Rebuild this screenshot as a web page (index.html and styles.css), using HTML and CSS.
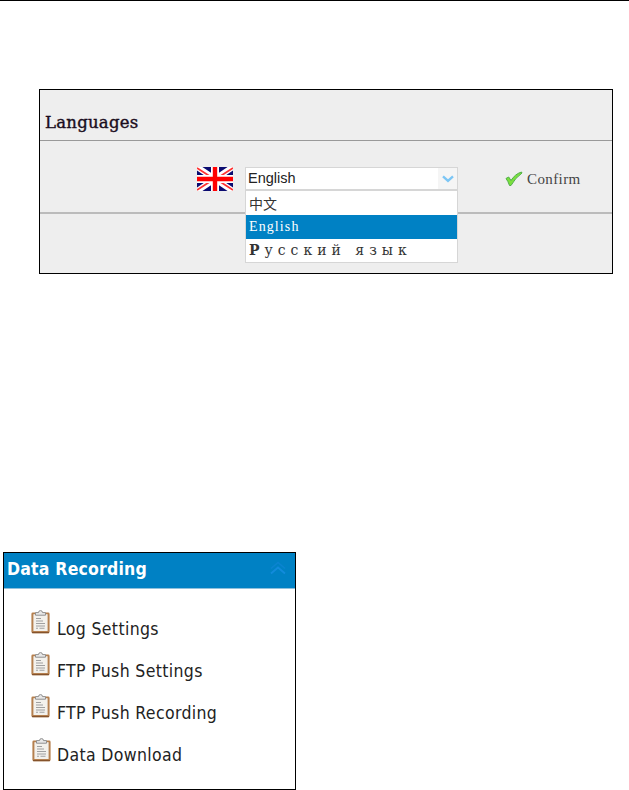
FILE: index.html
```html
<!DOCTYPE html>
<html lang="en">
<head>
  <meta charset="UTF-8">
  <title>Languages</title>
  <link rel="stylesheet" href="styles.css">
</head>
<body>
  <!-- shared icon -->
  <svg class="defs" width="0" height="0">
    <symbol id="clipboard" viewBox="0 0 20 24">
      <rect x=".4" y="2.6" width="18.2" height="20.6" rx="1.4" fill="#b5804f"/>
      <path d="M1 22.6h17" stroke="#85532c" stroke-width="1.2"/>
      <rect x="2.4" y="4.2" width="14.2" height="16.8" fill="#f3f1ec"/>
      <path d="M4.5 5.2V2.6h3q0-2 2-2t2 2h3v2.6z" fill="#e8e8e8" stroke="#909090"/>
      <path d="M5 8.5h5M5 11h7M5 13.5h9M5 16h9M5 18.3h2M8.5 18.3h5" stroke="#a0a0a0" stroke-width="1.1"/>
    </symbol>
  </svg>

  <div class="languages">
    <h2>Languages</h2>
    <div class="lang-row">
      <svg class="flag" width="36" height="24" viewBox="0 0 36 24">
        <rect width="36" height="24" fill="#0b0b70"/>
        <path d="M0 0l36 24M36 0L0 24" stroke="#fff" stroke-width="6"/>
        <path d="M0 1l14 9M36 1L22 10M0 23l14-9M36 23l-14-9" stroke="#f33" stroke-width="1.8"/>
        <path d="M18 0v24M0 12h36" stroke="#fff" stroke-width="8"/>
        <path d="M18 0v24M0 12h36" stroke="#f00" stroke-width="4.4"/>
      </svg>
      <div class="select">
        <div class="select-value">
          <span>English</span>
          <div class="select-arrow">
            <svg width="12" height="8" viewBox="0 0 12 8"><path d="M1 1.3l5 4.5 5-4.5" fill="none" stroke="#7cc6f5" stroke-width="2.4"/></svg>
          </div>
        </div>
        <ul class="select-menu">
          <li class="zh">中文</li>
          <li class="selected">English</li>
          <li class="ru"><b>Р</b>усский язык</li>
        </ul>
      </div>
      <svg class="check" width="18" height="16" viewBox="0 0 18 16">
        <path d="M1 7.5l2.7-1.5 2.3 3.5Q10 3 16.5 1L17 2Q10 7 6 14.5H4.5Q3 10 1 7.5z" fill="#7be03c" stroke="#4fae48"/>
      </svg>
      <span class="confirm">Confirm</span>
    </div>
  </div>

  <div class="recording">
    <div class="recording-title">
      <span>Data Recording</span>
      <svg width="16" height="14" viewBox="0 0 16 14">
        <path d="M1 7.5L8 1.5l7 6" fill="none" stroke="#0b84d0" stroke-width="1.6"/>
        <path d="M1 12.5l7-6 7 6" fill="none" stroke="#128bdc" stroke-width="1.8"/>
      </svg>
    </div>
    <ul class="recording-list">
      <li><svg width="20" height="24"><use href="#clipboard"/></svg><span>Log Settings</span></li>
      <li><svg width="20" height="24"><use href="#clipboard"/></svg><span>FTP Push Settings</span></li>
      <li><svg width="20" height="24"><use href="#clipboard"/></svg><span>FTP Push Recording</span></li>
      <li class="last"><svg width="20" height="24"><use href="#clipboard"/></svg><span>Data Download</span></li>
    </ul>
  </div>
</body>
</html>
```
FILE: styles.css
```css
* {
  box-sizing: border-box;
}

body {
  margin: 0;
  height: 790px;
  overflow: hidden;
  border-top: 1px solid #000;
  background: #fff;
}

ul {
  list-style: none;
  margin: 0;
  padding: 0;
}

.defs {
  position: absolute;
}

/* language panel */
.languages {
  width: 574px;
  height: 185px;
  margin: 88px 0 0 39px;
  border: 1px solid #000;
  background: #eee;
}

.languages h2 {
  height: 51px;
  margin: 0;
  padding: 21px 0 0 5px;
  border-bottom: 1px solid #999;
  font: 16.5px/24px "DejaVu Serif", serif;
  letter-spacing: .25px;
  -webkit-text-stroke: .4px #1a0d1d;
  color: #1a0d1d;
}

.lang-row {
  display: flex;
  align-items: flex-start;
  height: 73px;
  padding-left: 157px;
  border-bottom: 2px solid #bbb;
}

.flag {
  margin-top: 26px;
}

.select {
  width: 213px;
  margin: 26px 0 0 12px;
  position: relative;
}

.select-value {
  display: flex;
  justify-content: space-between;
  height: 24px;
  border: 1px solid #d6d6d6;
  border-bottom-width: 2px;
  background: #fff;
  font: 14.5px/20px "Liberation Sans", Arial, sans-serif;
  color: #222;
  padding-left: 2px;
}

.select-arrow {
  width: 19px;
  background: #f5f5f5;
  display: flex;
  align-items: center;
  justify-content: center;
}

/* opened list hangs over the row border */
.select-menu {
  position: absolute;
  top: 24px;
  left: 0;
  width: 213px;
  border: 1px solid #d6d6d6;
  border-top: none;
  background: #fff;
  color: #333;
}

.select-menu li {
  height: 23px;
  padding-left: 3px;
  font: 14px/23px "Liberation Serif", serif;
  white-space: nowrap;
}

.select-menu .zh {
  height: 24px;
  font: 14px/25px "Noto Sans CJK SC", sans-serif;
}

.select-menu .selected {
  height: 24px;
  background: #0081c4;
  color: #fff;
  line-height: 24px;
  letter-spacing: 1.1px;
}

.select-menu .ru {
  font: 14px/22px "DejaVu Serif", serif;
  letter-spacing: 5px;
}

.check {
  margin: 30px 0 0 47px;
}

.confirm {
  margin: 27px 0 0 4px;
  font: 15px/22px "Liberation Serif", serif;
  letter-spacing: .4px;
  color: #444;
}

/* menu panel */
.recording {
  width: 293px;
  height: 238px;
  margin: 278px 0 0 3px;
  border: 1px solid #000;
  background: #fff;
}

.recording-title {
  display: flex;
  justify-content: space-between;
  height: 36px;
  padding: 0 9px 0 3px;
  border-bottom: 1px solid #8fc0dc;
  background: #0081c4;
  color: #fff;
  font: bold 17.5px/32px "DejaVu Sans Condensed", "DejaVu Sans", sans-serif;
  letter-spacing: .2px;
}

.recording-title svg {
  margin-top: 8px;
}

.recording-list {
  padding: 21px 0 0 27px;
}

.recording-list li {
  display: flex;
  height: 42px;
  font: 17.5px/24px "DejaVu Sans Condensed", "DejaVu Sans", sans-serif;
  letter-spacing: .35px;
  color: #222;
}

.recording-list svg {
  margin: 0 6px 0 0;
}

.recording-list span {
  margin-top: 7px;
  white-space: nowrap;
}

.recording-list .last svg {
  margin: 2px 5px 0 1px;
}
```
